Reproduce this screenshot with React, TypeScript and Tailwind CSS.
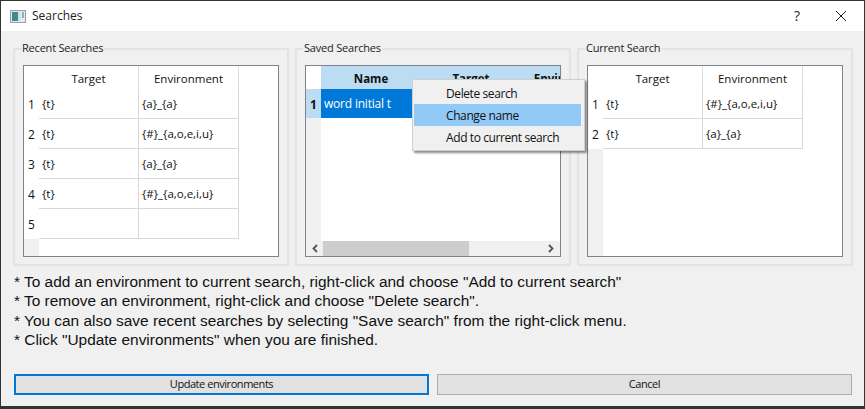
import React from "react";

const sans = "[font-family:'Open_Sans','Noto_Sans',sans-serif]";

function Group({ title, children }: { title: string; children: React.ReactNode }) {
  return (
    <div className="relative h-[218px] w-[276px] shrink-0 border-2 border-[#e3e3e3] pl-[8px] pt-[15px]">
      <span className="absolute left-[6px] top-[-9px] bg-[#f0f0f0] px-px text-[11px] leading-[14px] tracking-[-0.2px] text-[#222]">{title}</span>
      {children}
    </div>
  );
}

function DataTable({ rows }: { rows: [string, string, string][] }) {
  return (
    <div className="flex h-[192px] w-[256px] flex-col border border-[#80838a] bg-white text-[11.5px] text-[#111]">
      <div className="flex h-[23px] shrink-0">
        <div className="w-[15px] shrink-0 bg-white" />
        <div className="w-[100px] shrink-0 border-r border-[#dddddd] text-center leading-[25px]">Target</div>
        <div className="w-[100px] shrink-0 border-r border-[#dddddd] text-center leading-[25px]">Environment</div>
      </div>
      {rows.map(([n, a, b]) => (
        <div key={n} className="flex h-[30px] shrink-0">
          <div className="w-[15px] shrink-0 text-center text-[12px] leading-[31px]">{n}</div>
          <div className="w-[100px] shrink-0 border-b border-r border-[#d8d8d8] pl-[3px] leading-[29px]">{a}</div>
          <div className="w-[100px] shrink-0 border-b border-r border-[#d8d8d8] pl-[3px] leading-[29px]">{b}</div>
        </div>
      ))}
      <div className="flex flex-1">
        <div className="w-[15px] bg-[#f0f0f0]" />
      </div>
    </div>
  );
}

function SavedTable() {
  return (
    <div className="flex h-[192px] w-[256px] flex-col overflow-hidden border border-[#80838a] bg-white text-[#111]">
      <div className="flex h-[23px] shrink-0 bg-[#bcdcf4] text-[11.5px] font-bold">
        <div className="w-[15px] shrink-0 bg-white" />
        <div className="w-[100px] shrink-0 text-center leading-[25px]">Name</div>
        <div className="w-[100px] shrink-0 text-center leading-[25px]">Target</div>
        <div className="w-[100px] shrink-0 text-center leading-[25px]">Environment</div>
      </div>
      <div className="flex h-[29px] shrink-0">
        <div className="w-[15px] shrink-0 bg-[#bcdcf4] text-center text-[12px] font-bold leading-[31px]">1</div>
        <div className="flex-1 bg-[#0078d7] pl-[3px] text-[12px] leading-[30px] tracking-[-0.2px] text-white">word initial t</div>
      </div>
      <div className="flex min-h-0 flex-1">
        <div className="w-[15px] bg-[#f0f0f0]" />
      </div>
      <div className="flex h-[15px] shrink-0 items-center bg-[#f0f0f0]">
        <svg width="17" height="15" viewBox="0 0 17 15" className="shrink-0">
          <path d="M11 4 7.5 7.5 11 11" fill="none" stroke="#555" strokeWidth="1.8" />
        </svg>
        <div className="h-[15px] w-[146px] bg-[#cdcdcd]" />
        <div className="flex-1" />
        <svg width="17" height="15" viewBox="0 0 17 15" className="shrink-0">
          <path d="M6 4l3.5 3.5L6 11" fill="none" stroke="#555" strokeWidth="1.8" />
        </svg>
      </div>
    </div>
  );
}

export default function App() {
  return (
    <div className={`relative h-[409px] w-[865px] overflow-hidden bg-[#333] pb-[3px] pl-px pr-px pt-px ${sans}`}>
      <div className="flex h-full w-full flex-col bg-[#f0f0f0]">
        <div className="flex h-[30px] shrink-0 items-center bg-white">
          <svg width="16" height="13" viewBox="0 0 16 13" className="ml-[9px] shrink-0">
            <rect x="0.5" y="0.5" width="15" height="12" fill="#e8e8e8" stroke="#9aa0a0" />
            <rect x="2" y="2" width="6" height="9" fill="#3f8a8a" />
            <rect x="8" y="2" width="3" height="9" fill="#cfe3e3" />
            <rect x="12" y="2" width="2" height="6" fill="#8fb0c0" />
          </svg>
          <span className="ml-[6px] text-[12px] text-[#222]">Searches</span>
          <div className="flex-1" />
          <span className="mr-[35px] text-[14px] leading-none text-[#222]">?</span>
          <svg width="12" height="12" viewBox="0 0 12 12" className="mr-[17px] shrink-0">
            <path d="M1 1l10 10M11 1 1 11" stroke="#222" strokeWidth="1" fill="none" />
          </svg>
        </div>
        <div className="ml-[12px] mt-[17px] flex gap-[6px]">
          <Group title="Recent Searches">
            <DataTable
              rows={[
                ["1", "{t}", "{a}_{a}"],
                ["2", "{t}", "{#}_{a,o,e,i,u}"],
                ["3", "{t}", "{a}_{a}"],
                ["4", "{t}", "{#}_{a,o,e,i,u}"],
                ["5", "", ""],
              ]}
            />
          </Group>
          <Group title="Saved Searches">
            <SavedTable />
          </Group>
          <Group title="Current Search">
            <DataTable
              rows={[
                ["1", "{t}", "{#}_{a,o,e,i,u}"],
                ["2", "{t}", "{a}_{a}"],
              ]}
            />
          </Group>
        </div>
        <div className="ml-[13px] mt-[6px] font-['Liberation_Sans',sans-serif] text-[15.43px] leading-[19.25px] text-[#111]">
          <p>* To add an environment to current search, right-click and choose "Add to current search"</p>
          <p>* To remove an environment, right-click and choose "Delete search".</p>
          <p>* You can also save recent searches by selecting "Save search" from the right-click menu.</p>
          <p>* Click "Update environments" when you are finished.</p>
        </div>
        <div className="ml-[13px] mt-[25px] flex gap-[8px]">
          <button className="h-[21px] w-[415px] border-2 border-[#0078d7] bg-[#e1e1e1] text-[11px] tracking-[-0.45px] text-[#111]">Update environments</button>
          <button className="h-[21px] w-[415px] border border-[#adadad] bg-[#e1e1e1] text-[11px] tracking-[-0.45px] text-[#111]">Cancel</button>
        </div>
      </div>
      <div className="absolute left-[412px] top-[79px] h-[72px] w-[173px] border border-[#cfcfcf] bg-[#f0f0f0] pb-[2px] pl-px pr-[3px] pt-[2px] text-[12px] tracking-[-0.4px] text-[#111] shadow-[2px_2px_2px_rgba(0,0,0,0.45)]">
        <div className="h-[22px] pl-[32px] leading-[24px]">Delete search</div>
        <div className="h-[22px] bg-[#91c9f7] pl-[32px] leading-[24px]">Change name</div>
        <div className="h-[22px] pl-[32px] leading-[24px]">Add to current search</div>
      </div>
    </div>
  );
}
